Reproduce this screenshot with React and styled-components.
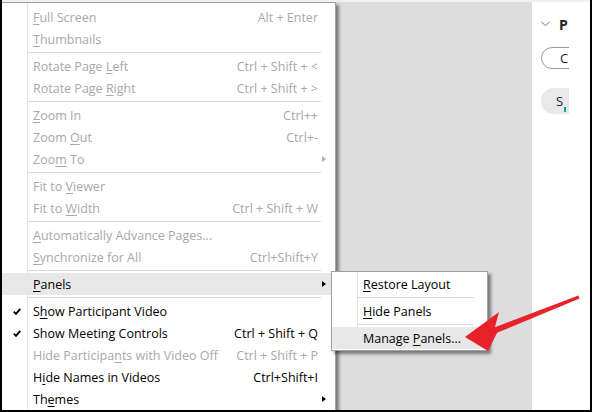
import React from "react";
import styled, { createGlobalStyle } from "styled-components";

const GlobalStyle = createGlobalStyle`
  html, body {
    margin: 0;
    padding: 0;
    background: #fff;
  }
  * {
    box-sizing: border-box;
  }
`;

const Frame = styled.div`
  position: relative;
  width: 592px;
  height: 412px;
  display: flex;
  flex-direction: column;
  border: 2px solid #000;
  border-top: none;
  overflow: hidden;
  font-family: "Open Sans", "Liberation Sans", sans-serif;
  font-size: 12.5px;
`;

const TopStrip = styled.div`
  flex: none;
  height: 2px;
  background: #f0f0f0;
`;

const Workspace = styled.div`
  flex: 1;
  display: flex;
  min-height: 0;
`;

const Canvas = styled.div`
  position: relative;
  flex: 1;
  background: #dddddd;
`;

const Menu = styled.div`
  position: absolute;
  left: 0;
  top: 0;
  width: 334px;
  padding-top: 3px;
  border-top: 1px solid #a0a0a0;
  border-right: 1px solid #a0a0a0;
  background: linear-gradient(to right, transparent 25px, #e3e3e3 25px, #e3e3e3 26px, transparent 26px), #fff;
  box-shadow: 3px 3px 3px rgba(0, 0, 0, 0.45);
`;

const SubMenu = styled.div`
  position: absolute;
  left: 329px;
  top: 269px;
  width: 157px;
  padding: 1px 0;
  border: 1px solid #a0a0a0;
  background: linear-gradient(to right, transparent 25px, #e3e3e3 25px, #e3e3e3 26px, transparent 26px), #fff;
  box-shadow: 3px 3px 3px rgba(0, 0, 0, 0.45);
`;

const Item = styled.div`
  display: grid;
  grid-template-columns: 31px 1fr auto ${(p) => (p.$compact ? 4 : 17)}px;
  align-items: center;
  height: 22px;
  white-space: nowrap;
  color: ${(p) => (p.$disabled ? "#a8a8a8" : "#000")};
  background: ${(p) => (p.$active ? "#e8e8e8" : "transparent")};
`;

const CheckCell = styled.span`
  display: flex;
  align-items: center;
  padding-left: 11px;
`;

const Label = styled.span`
  min-width: 0;
`;

const Key = styled.span`
  text-decoration: underline;
  text-underline-offset: 2px;
`;

const Shortcut = styled.span`
  padding-left: 12px;
  text-align: right;
`;

const CaretCell = styled.span`
  display: flex;
  align-items: center;
  padding-left: 4px;
`;

const Caret = styled.span`
  display: block;
  width: 0;
  height: 0;
  border-left: 4px solid ${(p) => (p.$disabled ? "#b0b0b0" : "#000")};
  border-top: 3.5px solid transparent;
  border-bottom: 3.5px solid transparent;
`;

const Separator = styled.div`
  height: 5px;
  display: flex;
  align-items: center;
  padding: 0 ${(p) => p.$right || 14}px 0 25px;

  &::after {
    content: "";
    flex: 1;
    height: 1px;
    background: #dadada;
  }
`;

const RightPanel = styled.div`
  width: 58px;
  background: #fff;
`;

const PanelClip = styled.div`
  width: 37px;
  overflow: hidden;
  padding: 14px 0 0 9px;
`;

const PanelHeader = styled.div`
  display: flex;
  align-items: center;
  gap: 9px;
  height: 16px;
  white-space: nowrap;
  font-size: 14px;
  font-weight: 700;
  color: #222;

  svg {
    flex: none;
  }
`;

const Pill = styled.div`
  display: flex;
  align-items: center;
  margin-top: ${(p) => p.$top}px;
  width: 80px;
  height: ${(p) => (p.$filled ? 26 : 22)}px;
  padding-left: ${(p) => (p.$filled ? 15 : 18)}px;
  gap: 1px;
  border-radius: 13px;
  border: ${(p) => (p.$filled ? "none" : "1px solid #9a9a9a")};
  background: ${(p) => (p.$filled ? "#e9e9e9" : "#fff")};
  font-size: 13px;
  color: #222;
  white-space: nowrap;
`;

const Badge = styled.span`
  align-self: flex-end;
  width: 2px;
  height: 5px;
  margin-bottom: 2px;
  background: #18a0a8;
`;

const Overlay = styled.svg`
  position: absolute;
  left: -2px;
  top: 0;
  pointer-events: none;
`;

const mainItems = [
  { label: "Full Screen", key: 0, shortcut: "Alt + Enter", disabled: true },
  { label: "Thumbnails", key: 0, disabled: true },
  "sep",
  { label: "Rotate Page Left", key: 12, shortcut: "Ctrl + Shift + <", disabled: true },
  { label: "Rotate Page Right", key: 12, shortcut: "Ctrl + Shift + >", disabled: true },
  "sep",
  { label: "Zoom In", key: 0, shortcut: "Ctrl++", disabled: true },
  { label: "Zoom Out", key: 5, shortcut: "Ctrl+-", disabled: true },
  { label: "Zoom To", key: 3, sub: true, disabled: true },
  "sep",
  { label: "Fit to Viewer", key: 7, disabled: true },
  { label: "Fit to Width", key: 7, shortcut: "Ctrl + Shift + W", disabled: true },
  "sep",
  { label: "Automatically Advance Pages...", key: 0, disabled: true },
  { label: "Synchronize for All", key: 0, shortcut: "Ctrl+Shift+Y", disabled: true },
  "sep",
  { label: "Panels", key: 0, sub: true, active: true },
  "sep",
  { label: "Show Participant Video", key: 1, checked: true },
  { label: "Show Meeting Controls", key: -1, shortcut: "Ctrl + Shift + Q", checked: true },
  { label: "Hide Participants with Video Off", key: 14, shortcut: "Ctrl + Shift + P", disabled: true },
  { label: "Hide Names in Videos", key: 1, shortcut: "Ctrl+Shift+I" },
  { label: "Themes", key: 2, sub: true },
];

const panelItems = [
  { label: "Restore Layout", key: 0 },
  "sep",
  { label: "Hide Panels", key: 0 },
  "sep",
  { label: "Manage Panels...", key: 7, active: true },
];

function CheckMark() {
  return (
    <svg width="8" height="7" viewBox="0 0 8 7">
      <path d="M0.8 3.6 L3 5.9 L7.3 0.8" fill="none" stroke="#000" strokeWidth="1.8" />
    </svg>
  );
}

function Chevron() {
  return (
    <svg width="9" height="6" viewBox="0 0 9 6">
      <path d="M0.5 0.8 L4.5 4.8 L8.5 0.8" fill="none" stroke="#777" strokeWidth="1" />
    </svg>
  );
}

function MenuLabel({ text, at }) {
  if (at < 0) return <Label>{text}</Label>;
  return (
    <Label>
      {text.slice(0, at)}
      <Key>{text[at]}</Key>
      {text.slice(at + 1)}
    </Label>
  );
}

function MenuList({ items, sepRight, compact }) {
  return items.map((it, i) =>
    it === "sep" ? (
      <Separator key={i} $right={sepRight} />
    ) : (
      <Item key={i} $disabled={it.disabled} $active={it.active} $compact={compact}>
        <CheckCell>{it.checked && <CheckMark />}</CheckCell>
        <MenuLabel text={it.label} at={it.key} />
        <Shortcut>{it.shortcut}</Shortcut>
        <CaretCell>{it.sub && <Caret $disabled={it.disabled} />}</CaretCell>
      </Item>
    )
  );
}

export default function App() {
  return (
    <>
      <GlobalStyle />
      <Frame>
        <TopStrip />
        <Workspace>
          <Canvas>
            <Menu>
              <MenuList items={mainItems} />
            </Menu>
            <SubMenu>
              <MenuList items={panelItems} sepRight={13} compact />
            </SubMenu>
          </Canvas>
          <RightPanel>
            <PanelClip>
              <PanelHeader>
                <Chevron />
                <span>P</span>
              </PanelHeader>
              <Pill $top={15}>C</Pill>
              <Pill $top={19} $filled>
                S<Badge />
              </Pill>
            </PanelClip>
          </RightPanel>
        </Workspace>
        <Overlay width="592" height="412" viewBox="0 0 592 412">
          <polygon
            points="578.4,295.6 494.9,327.2 499,312 465,337 488,351 497.1,332.8 579.6,298.4"
            fill="#e8222b"
          />
        </Overlay>
      </Frame>
    </>
  );
}
